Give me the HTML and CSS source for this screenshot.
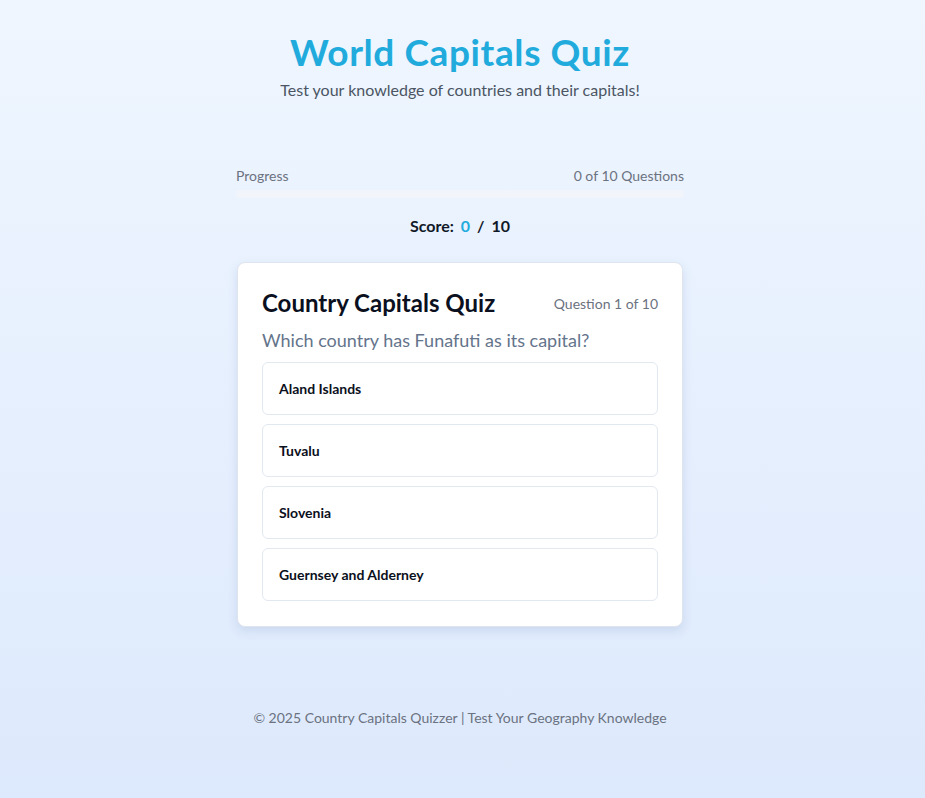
FILE: index.html
```html
<!DOCTYPE html>
<html lang="en">
<head>
<meta charset="utf-8">
<title>World Capitals Quiz</title>
<link rel="stylesheet" href="styles.css">
</head>
<body>
<div class="page">
  <header class="header">
    <h1 class="title">World Capitals Quiz</h1>
    <p class="subtitle">Test your knowledge of countries and their capitals!</p>
  </header>
  <main class="main">
    <div class="progress">
      <div class="progress-labels">
        <span>Progress</span>
        <span>0 of 10 Questions</span>
      </div>
      <div class="progress-track"><div class="progress-fill" style="width:0%"></div></div>
    </div>
    <div class="score">Score: <span class="score-value">0</span> <span class="score-sep">/</span> 10</div>
    <section class="card">
      <div class="card-head">
        <h2 class="card-title">Country Capitals Quiz</h2>
        <span class="card-count">Question 1 of 10</span>
      </div>
      <p class="question">Which country has Funafuti as its capital?</p>
      <div class="options">
        <button class="option">Aland Islands</button>
        <button class="option">Tuvalu</button>
        <button class="option">Slovenia</button>
        <button class="option">Guernsey and Alderney</button>
      </div>
    </section>
  </main>
  <footer class="footer">© 2025 Country Capitals Quizzer | Test Your Geography Knowledge</footer>
</div>
</body>
</html>
```
FILE: styles.css
```css
* { box-sizing: border-box; }
html, body { margin: 0; padding: 0; }
body {
  font-family: "Lato", "Noto Sans", sans-serif;
  background: linear-gradient(to bottom, #eff6ff, #dde9fc);
  min-height: 798px;
  color: #111827;
}
.page {
  display: flex;
  flex-direction: column;
  align-items: center;
  padding-top: 30px;
  padding-right: 5px;
}
.header { text-align: center; }
.title {
  margin: 0;
  font-size: 37px;
  line-height: 44px;
  font-weight: 700;
  letter-spacing: 0.6px;
  color: #21abdd;
}
.subtitle {
  margin: 4px 0 0;
  font-size: 16px;
  line-height: 24px;
  color: #4b5563;
}
.main {
  width: 448px;
  margin-top: 64px;
}
.progress-labels {
  display: flex;
  justify-content: space-between;
  font-size: 14px;
  line-height: 20px;
  color: #6b7280;
}
.progress-track {
  margin-top: 4px;
  height: 8px;
  border-radius: 4px;
  background: #f1f5fb;
  overflow: hidden;
}
.progress-fill { height: 100%; background: #21abdd; }
.score {
  margin-top: 16px;
  text-align: center;
  font-size: 16px;
  line-height: 24px;
  font-weight: 700;
  color: #111827;
}
.score-value { color: #21abdd; margin: 0 3px; }
.score-sep { margin-right: 3px; }
.card {
  margin-top: 24px;
  margin-left: 1px;
  margin-right: 1px;
  background: #fff;
  border: 1px solid #dfe5ee;
  border-radius: 8px;
  padding: 24px 24px 25px;
  box-shadow: 0 4px 10px rgba(100, 130, 180, 0.18);
}
.card-head {
  display: flex;
  justify-content: space-between;
  align-items: center;
}
.card-title {
  margin: 0;
  font-size: 24px;
  line-height: 32px;
  font-weight: 700;
  color: #0b1020;
}
.card-count {
  font-size: 14px;
  color: #6b7280;
}
.question {
  margin: 7px 0 8px;
  font-size: 18px;
  line-height: 28px;
  color: #64748b;
}
.options {
  display: flex;
  flex-direction: column;
  gap: 9px;
}
.option {
  display: block;
  width: 100%;
  text-align: left;
  font-family: inherit;
  font-size: 14px;
  line-height: 21px;
  font-weight: 700;
  color: #0b1020;
  background: #fff;
  border: 1px solid #e2e8f0;
  border-radius: 6px;
  padding: 15px 16px;
  cursor: pointer;
}
.footer {
  margin-top: 81px;
  font-size: 14px;
  line-height: 20px;
  color: #6b7280;
}
```
